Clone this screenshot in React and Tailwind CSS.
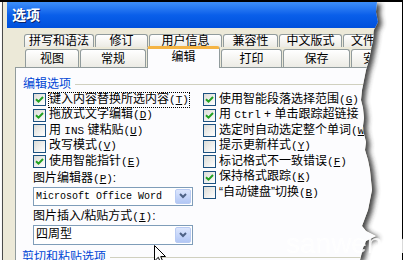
import React from 'react'

// torn edge, dialog coordinates (page x - 2, page y - 2)
const edge = [
  [375, 0], [374, 10], [376, 20], [372, 28], [371, 38], [369, 48], [367, 58], [364, 68],
  [362, 78], [360, 88], [359, 98], [361, 106], [362, 116], [361, 124], [362, 132], [364, 140],
  [363, 148], [366, 158], [368, 168], [369, 178], [370, 188], [368, 198], [366, 208], [363, 216],
  [360, 224], [364, 229], [374, 234], [364, 239], [361, 246], [358, 258],
]

const shadowPts = [[0, 0], ...edge, [0, 258]].map(([x, y]) => `${x + 6},${y + 2}`).join(' ')

const row1 = [
  ['拼写和语法', 'w-[70px]'],
  ['修订', 'w-[53px]'],
  ['用户信息', 'w-[73px]'],
  ['兼容性', 'w-[55px]'],
  ['中文版式', 'w-[63px]'],
  ['文件位置', 'w-[64px]'],
]

const row2 = [
  ['视图', 'w-[54px]'],
  ['常规', 'w-[66px]'],
  ['编辑', 'w-[73px]', true],
  ['打印', 'w-[61px]'],
  ['保存', 'w-[67px]'],
  ['安全性', 'w-[60px]'],
]

function Check({ on }) {
  return (
    <span className="flex h-[13px] w-[13px] shrink-0 items-center justify-center border border-[#1C5180] bg-linear-to-br from-[#DCDCD7] to-white">
      {on && (
        <svg width="9" height="9" viewBox="0 0 9 9">
          <path d="M1 4.3 L3.5 6.7 L8 2" fill="none" stroke="#21A121" strokeWidth="2" />
        </svg>
      )}
    </span>
  )
}

function Key({ k }) {
  return (
    <span className="font-['Liberation_Mono',monospace] text-[11px]">
      (<span className="underline">{k}</span>)
    </span>
  )
}

function Mono({ children }) {
  return <span className="font-['Liberation_Mono',monospace] text-[11px]">{children}</span>
}

function Opt({ on, k, focus, children }) {
  return (
    <div className="flex h-[15.5px] items-center gap-[3px] whitespace-nowrap">
      <Check on={on} />
      <span className={focus ? 'leading-[13px] outline-1 outline-dotted outline-black' : ''}>
        {children}
        {k && <Key k={k} />}
      </span>
    </div>
  )
}

function Combo({ h, children }) {
  return (
    <div className={`flex w-[160px] items-stretch border border-[#7F9DB9] bg-white ${h}`}>
      <div className="flex flex-1 items-center pl-[2px]">{children}</div>
      <div className="m-px flex w-[16px] items-center justify-center rounded-[2px] border border-[#B9CBF3] bg-linear-to-b from-[#DCE6FD] to-[#B2C7F5]">
        <svg width="8" height="6" viewBox="0 0 8 6">
          <path d="M1 1 L4 4 L7 1" fill="none" stroke="#4D6185" strokeWidth="2" />
        </svg>
      </div>
    </div>
  )
}

export default function App() {
  return (
    <div className="relative h-[260px] w-[414px] overflow-hidden bg-white font-['Liberation_Sans','Noto_Sans_CJK_SC',sans-serif] text-[12px] text-black">
      <div className="relative h-[260px] w-[403px] border-t-2 border-r border-black">
        <svg className="absolute inset-0" width="401" height="258">
          <defs>
            <filter id="blur" x="-10%" y="-10%" width="120%" height="120%">
              <feGaussianBlur stdDeviation="2.5" />
            </filter>
          </defs>
          <polygon points={shadowPts} fill="#333" opacity="0.9" filter="url(#blur)" />
        </svg>

        <div className="relative ml-[2px] flex h-full flex-col border-l border-[#4b4b4b] bg-[#ECE9D8] [clip-path:polygon(0_0,375px_0,374px_10px,376px_20px,372px_28px,371px_38px,369px_48px,367px_58px,364px_68px,362px_78px,360px_88px,359px_98px,361px_106px,362px_116px,361px_124px,362px_132px,364px_140px,363px_148px,366px_158px,368px_168px,369px_178px,370px_188px,368px_198px,366px_208px,363px_216px,360px_224px,364px_229px,374px_234px,364px_239px,361px_246px,358px_258px,0_258px)]">
          {/* title bar */}
          <div className="ml-[4px] flex h-[26px] w-[400px] shrink-0 items-center bg-linear-to-b from-[#3D8EF8] via-[#0A5FEA] to-[#0050DC] pl-[5px]">
            <span className="text-[14px] font-bold text-white [text-shadow:1px_1px_0_#0A246A]">选项</span>
          </div>

          {/* tabs */}
          <div className="mt-[6px] ml-[21px] flex h-[16px] gap-px">
            {row1.map(([t, w]) => (
              <div
                key={t}
                className={`${w} flex shrink-0 items-center justify-center rounded-t-[3px] border border-b-0 border-[#919B9C] bg-linear-to-b from-white to-[#ECEBE5] leading-none`}
              >
                {t}
              </div>
            ))}
          </div>
          <div className="mt-[2px] ml-[22px] flex h-[18px] items-end gap-px">
            {row2.map(([t, w, sel]) =>
              sel ? (
                <div
                  key={t}
                  className={`${w} relative z-10 -mb-px flex h-[22px] shrink-0 items-center justify-center rounded-t-[3px] border border-b-0 border-[#919B9C] border-t-[3px] border-t-[#F5B443] bg-[#FCFCFE] pb-[3px] leading-none`}
                >
                  {t}
                </div>
              ) : (
                <div
                  key={t}
                  className={`${w} flex h-[18px] shrink-0 items-center justify-center rounded-t-[3px] border border-b-0 border-[#919B9C] bg-linear-to-b from-white to-[#ECEBE5] leading-none`}
                >
                  {t}
                </div>
              )
            )}
          </div>

          {/* panel */}
          <div className="ml-[12px] w-[420px] flex-1 border border-[#919B9C] bg-[#FCFCFE] pt-[9px] leading-[15px]">
            <div className="flex items-center gap-[4px] pl-[7px]">
              <span className="text-[#0046D5]">编辑选项</span>
              <span className="h-px flex-1 bg-[#D0D0BF]" />
            </div>

            <div className="grid grid-cols-[170px_1fr] pl-[17px]">
              <div className="flex flex-col">
                <Opt on k="T" focus>键入内容替换所选内容</Opt>
                <Opt on k="D">拖放式文字编辑</Opt>
                <Opt k="U">
                  用 <Mono>INS</Mono> 键粘贴
                </Opt>
                <Opt k="V">改写模式</Opt>
                <Opt on k="E">使用智能指针</Opt>
                <div className="mt-[1px]">
                  图片编辑器<Key k="P" />:
                </div>
                <Combo h="h-[19px]">
                  <span className="font-['Liberation_Mono',monospace] text-[10px]">Microsoft Office Word</span>
                </Combo>
                <div className="mt-[3px]">
                  图片插入/粘贴方式<Key k="I" />:
                </div>
                <Combo h="h-[20px]">
                  <span>四周型</span>
                </Combo>
              </div>
              <div className="flex flex-col">
                <Opt on k="G">使用智能段落选择范围</Opt>
                <Opt on>
                  用 <Mono>Ctrl</Mono> + 单击跟踪超链接
                </Opt>
                <Opt k="W">选定时自动选定整个单词</Opt>
                <Opt k="Y">提示更新样式</Opt>
                <Opt k="F">标记格式不一致错误</Opt>
                <Opt on k="K">保持格式跟踪</Opt>
                <Opt k="B">“自动键盘”切换</Opt>
              </div>
            </div>

            <div className="mt-[5px] flex items-center gap-[4px] pl-[6px]">
              <span className="text-[#0046D5]">剪切和粘贴选项</span>
              <span className="h-px flex-1 bg-[#D0D0BF]" />
            </div>
          </div>
        </div>
      </div>

      {/* mouse pointer */}
      <svg className="absolute top-[245px] left-[154px]" width="13" height="20" viewBox="0 0 13 20">
        <path d="M0.5 0.5 L0.5 16 L4.3 12.3 L7 18.5 L9.3 17.5 L6.7 11.5 L11.5 11.5 Z" fill="white" stroke="black" strokeWidth="1" />
      </svg>

      {/* watermark */}
      <div className="absolute top-[230px] left-[286px] text-[28px] leading-none text-white opacity-85">sanwen.net</div>
    </div>
  )
}
